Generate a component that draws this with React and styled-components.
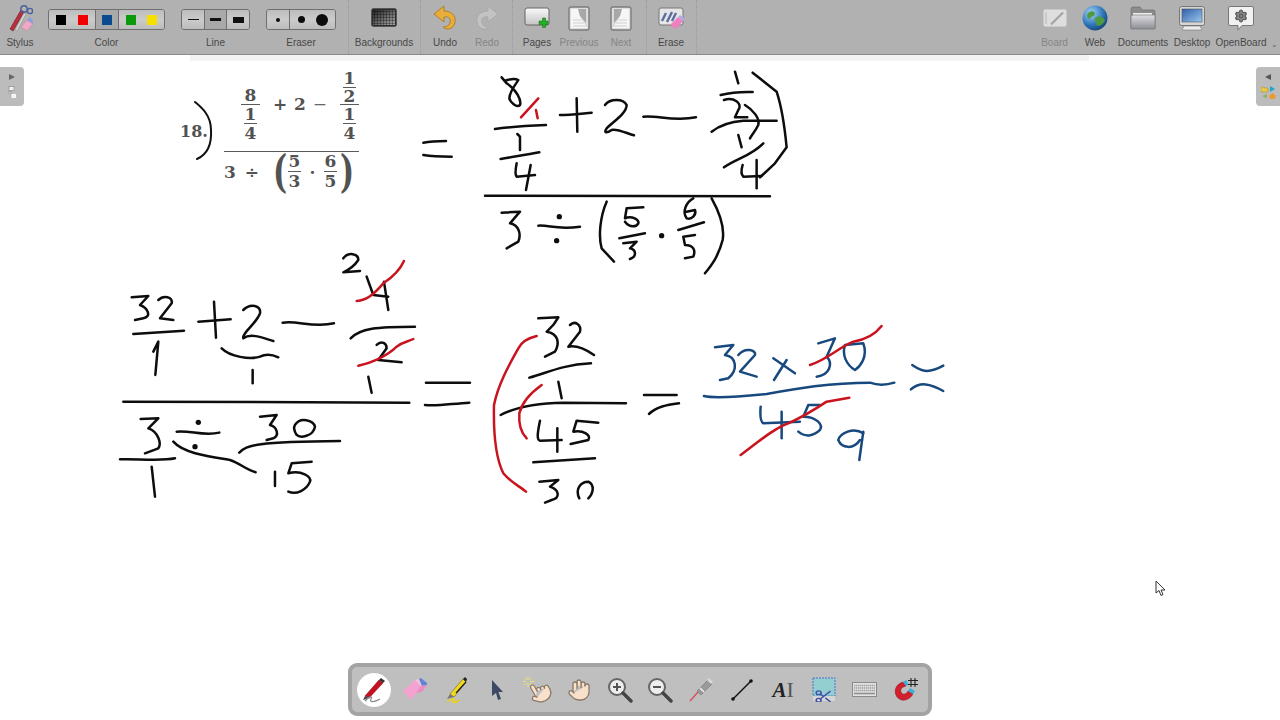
import React from 'react';
import styled, { createGlobalStyle } from 'styled-components';
import { Hand, Pointer, Scissors, Settings } from 'lucide-react';

const GlobalStyle = createGlobalStyle`
    html, body { margin: 0; padding: 0; background: #fff; }
    body { font-family: "Liberation Sans", sans-serif; overflow: hidden; }
`;

const Page = styled.div`
    width: 1280px;
    height: 720px;
    display: flex;
    flex-direction: column;
    overflow: hidden;
`;

const TopBar = styled.div`
    height: 54px;
    flex: none;
    display: flex;
    align-items: stretch;
    background: #b1b1b1;
    border-bottom: 1px solid #8b8b8b;
`;

const Spacer = styled.div`
    flex: 1;
`;

const Tool = styled.div`
    width: ${p => p.$w}px;
    flex: none;
    display: flex;
    flex-direction: column;
    align-items: center;
    color: ${p => (p.$off ? '#858585' : '#484848')};
`;

const ToolIcon = styled.div`
    height: 36px;
    display: flex;
    align-items: center;
    justify-content: center;
    opacity: ${p => (p.$off ? 0.75 : 1)};
`;

const ToolLabel = styled.div`
    font-size: 10px;
    line-height: 14px;
    white-space: nowrap;
`;

const Sep = styled.div`
    width: 0;
    flex: none;
    margin: 0 3px 0 ${p => p.$l || 4}px;
    border-left: 1px dotted #999;
`;

const ControlGroup = styled.div`
    flex: none;
    margin-left: ${p => p.$ml}px;
    display: flex;
    flex-direction: column;
    align-items: center;
    color: #484848;
`;

const Segmented = styled.div`
    margin-top: 9px;
    height: 21px;
    margin-bottom: 6px;
    box-sizing: border-box;
    display: flex;
    border: 1px solid #6f6f6f;
    border-radius: 3px;
    overflow: hidden;
`;

const Segment = styled.div`
    width: ${p => p.$w}px;
    display: flex;
    align-items: center;
    justify-content: space-around;
    padding: 0 ${p => p.$pad || 0}px;
    box-sizing: border-box;
    background: ${p => (p.$on ? '#a9a9a9' : 'linear-gradient(#bdbdbd, #cbcbcb 50%, #bdbdbd)')};
    & + & { border-left: 1px solid #6f6f6f; }
`;

const Swatch = styled.div`
    width: 10px;
    height: 10px;
    background: ${p => p.$c};
`;

const LineMark = styled.div`
    width: ${p => p.$w}px;
    height: ${p => p.$h}px;
    background: #111;
`;

const Dot = styled.div`
    width: ${p => p.$d}px;
    height: ${p => p.$d}px;
    border-radius: 50%;
    background: #0c0c0c;
`;

const MoreArrow = styled.div`
    width: 11px;
    flex: none;
    display: flex;
    align-items: flex-end;
    justify-content: center;
    padding-bottom: 5px;
    box-sizing: border-box;
    color: #666;
    font-size: 8px;
    line-height: 8px;
`;

const Canvas = styled.div`
    flex: 1;
    position: relative;
    background: #fff;
`;

const TopStrip = styled.div`
    height: 6px;
    margin: 0 191px 0 190px;
    background: #f3f3f3;
`;

const Ink = styled.svg`
    position: absolute;
    left: 0;
    top: 0;
    width: 1280px;
    height: 665px;
    fill: none;
    stroke-linecap: round;
    stroke-linejoin: round;
`;

const SideTab = styled.div`
    position: absolute;
    top: 12px;
    ${p => (p.$right ? 'right: 0;' : 'left: 0;')}
    width: 24px;
    height: 39px;
    background: #bcbcbc;
    border-radius: ${p => (p.$right ? '4px 0 0 4px' : '0 4px 4px 0')};
    display: flex;
    flex-direction: column;
    align-items: center;
    padding-top: 6px;
    box-sizing: border-box;
    gap: 5px;
`;

const Problem = styled.div`
    position: absolute;
    left: 180px;
    top: 14px;
    display: flex;
    align-items: center;
    color: #525252;
    font-family: "DejaVu Serif", "Liberation Serif", serif;
    font-weight: 700;
    font-size: 17px;
`;

const ProblemNo = styled.div`
    width: 44px;
    flex: none;
    margin-top: 3px;
    font-size: 16px;
`;

const Frac = styled.div`
    display: flex;
    flex-direction: column;
    align-items: center;
`;

const Rule = styled.div`
    height: 1px;
    width: ${p => p.$w}px;
    background: #5a5a5a;
`;

const Cell = styled.div`
    line-height: ${p => p.$h || 18}px;
    height: ${p => p.$h || 18}px;
`;

const Numerator = styled.div`
    width: 135px;
    box-sizing: border-box;
    padding-left: 17px;
    margin-bottom: 9px;
    display: flex;
    align-items: flex-end;
    justify-content: space-between;
`;

const Denominator = styled.div`
    width: 135px;
    display: flex;
    align-items: center;
`;

const MiddleOp = styled.div`
    margin-bottom: 28px;
    white-space: pre;
    word-spacing: 1px;
`;

const Minus = styled.span`
    font-weight: 400;
    color: #666;
`;

const DivideOp = styled.div`
    width: 46px;
    flex: none;
    white-space: pre;
    word-spacing: 3px;
`;

const TimesOp = styled.div`
    width: 23px;
    flex: none;
    text-align: center;
`;

const BigParen = styled.div`
    width: 18px;
    flex: none;
    text-align: center;
    font-size: 44px;
    font-weight: 700;
    line-height: 38px;
    transform: scaleX(.68);
`;

const Dock = styled.div`
    position: absolute;
    left: 348px;
    bottom: 4px;
    width: 584px;
    height: 53px;
    box-sizing: border-box;
    display: flex;
    align-items: center;
    justify-content: center;
    background: #bfbfbf;
    border: 4px solid #a3a3a3;
    border-radius: 9px;
`;

const DockSlot = styled.div`
    width: 40.9px;
    height: 40px;
    flex: none;
    display: flex;
    align-items: center;
    justify-content: center;
`;

const DockActive = styled.div`
    width: 34px;
    height: 34px;
    border-radius: 50%;
    display: flex;
    align-items: center;
    justify-content: center;
    background: radial-gradient(#fff 65%, #ddd);
`;

const TextToolA = styled.div`
    display: flex;
    align-items: center;
    color: #222;
    font-family: "Liberation Serif", serif;
    font-style: italic;
    font-weight: 700;
    font-size: 21px;
    line-height: 24px;
`;

const TextToolCaret = styled.span`
    font-style: normal;
    font-weight: 400;
    font-size: 22px;
    color: #555;
`;

const MouseCursor = styled.svg`
    position: absolute;
    left: 1155px;
    top: 525px;
`;

const StylusIcon = () => (
    <svg width="26" height="28" viewBox="0 0 26 28">
        <path d="M3 25 L14 6 L17 8 L6 27 Z" fill="#b8303a" stroke="#6b1a20" strokeWidth=".6" />
        <path d="M8 26 L17 9 L19 10 L10 27 Z" fill="#d8d8d8" stroke="#777" strokeWidth=".4" />
        <circle cx="17" cy="5" r="3.2" fill="none" stroke="#4a5f9c" strokeWidth="1.4" />
        <circle cx="23" cy="7" r="2.6" fill="none" stroke="#4a5f9c" strokeWidth="1.4" />
        <path d="M14 23 L20 16 L26 20 L20 27 Z" fill="#f0a8c8" stroke="#b77" strokeWidth=".4" />
        <path d="M20 16 L23 13 L26 17 L26 20 Z" fill="#8a9fd8" />
    </svg>
);

const BackgroundsIcon = () => (
    <svg width="26" height="20" viewBox="0 0 26 20">
        <defs>
            <linearGradient id="bgGrad" x1="0" y1="0" x2="1" y2="1">
                <stop offset="0" stopColor="#222" />
                <stop offset="1" stopColor="#aaa" />
            </linearGradient>
            <pattern id="bgGrid" width="3" height="3" patternUnits="userSpaceOnUse">
                <path d="M3 0H0V3" fill="none" stroke="#000" strokeWidth=".6" />
            </pattern>
        </defs>
        <rect x=".5" y=".5" width="25" height="18" rx="2" fill="#2c2c2c" stroke="#555" />
        <rect x="2" y="2" width="22" height="15" fill="url(#bgGrad)" />
        <rect x="2" y="2" width="22" height="15" fill="url(#bgGrid)" />
    </svg>
);

const ArrowIcon = ({ flip, fill, edge }) => (
    <svg width="24" height="26" viewBox="0 0 24 26" style={flip ? { transform: 'scaleX(-1)' } : undefined}>
        <path d="M11 1 L1 9 L11 17 L11 12 C16 11 18 14 17 18 C16 21 13 22 10 22 C14 26 21 24 22 17 C23 10 18 6 11 6 Z" fill={fill} stroke={edge} strokeWidth=".8" />
    </svg>
);

const PagesIcon = () => (
    <svg width="26" height="24" viewBox="0 0 26 24">
        <defs>
            <linearGradient id="pageGrad" x1="0" y1="0" x2="0" y2="1">
                <stop offset="0" stopColor="#fafafa" />
                <stop offset="1" stopColor="#c4c4c4" />
            </linearGradient>
        </defs>
        <rect x="1" y="2" width="24" height="17" rx="2" fill="url(#pageGrad)" stroke="#666" />
        <path d="M17 15 h3.5 v-3 h3 v3 h2.5 v3.5 h-2.5 v3 h-3 v-3 h-3.5 Z" transform="translate(-2 0)" fill="#22b022" stroke="#136b13" strokeWidth=".5" />
    </svg>
);

const PageFlipIcon = ({ flip }) => (
    <svg width="22" height="25" viewBox="0 0 22 25" style={flip ? { transform: 'scaleX(-1)' } : undefined}>
        <rect x="1" y="1" width="20" height="23" rx="2" fill="#dcdcdc" stroke="#7c7c7c" strokeWidth="1.4" />
        <path d="M3 22 L3 3 L10 3 L12 10 L19 22 Z" fill="#f6f6f6" />
        <path d="M10 3 L18 3 L18 17 L12 10 Z" fill="#a8a8a8" />
        <path d="M5 14H14M5 17H16M5 20H18" stroke="#cfcfcf" strokeWidth="1" />
    </svg>
);

const EraseIcon = () => (
    <svg width="27" height="24" viewBox="0 0 27 24">
        <rect x="1" y="2" width="24" height="17" rx="2" fill="#e6e6e6" stroke="#777" />
        <path d="M4 15 L8 7 M9 16 L14 6 M14 15 L18 7" stroke="#5a6fa0" strokeWidth="2.4" />
        <path d="M12 19 L20 11 L25 15 L18 23 Z" fill="#ee7fc0" />
        <path d="M20 11 L22 9 L27 13 L25 15 Z" fill="#b9a8e0" />
    </svg>
);

const BoardIcon = () => (
    <svg width="24" height="18" viewBox="0 0 24 18">
        <rect x=".5" y=".5" width="23" height="17" rx="2" fill="#dedede" stroke="#c8c8c8" />
        <path d="M7 15 L19 3 L21 4 L9 16 Z" fill="#a2a2a2" />
        <path d="M3 3V15" stroke="#b5b5b5" strokeWidth="1" />
    </svg>
);

const WebIcon = () => (
    <svg width="26" height="26" viewBox="0 0 26 26">
        <defs>
            <radialGradient id="globe" cx=".35" cy=".3" r=".8">
                <stop offset="0" stopColor="#a5d4f5" />
                <stop offset=".6" stopColor="#2c74b8" />
                <stop offset="1" stopColor="#113c6b" />
            </radialGradient>
        </defs>
        <circle cx="13" cy="13" r="12.5" fill="url(#globe)" />
        <path d="M6 8 C9 5 13 6 13 9 C12 12 8 11 8 14 C6 14 4 11 6 8 Z M13 13 C17 10 22 12 23 16 C20 20 17 22 14 20 C15 17 12 16 13 13 Z" fill="#4f9a3f" />
    </svg>
);

const FolderIcon = () => (
    <svg width="26" height="24" viewBox="0 0 26 24">
        <defs>
            <linearGradient id="folderGrad" x1="0" y1="0" x2="0" y2="1">
                <stop offset="0" stopColor="#dedee2" />
                <stop offset="1" stopColor="#8d8d96" />
            </linearGradient>
        </defs>
        <path d="M1 22 V3 Q1 1 3 1 H10 L12 4 H23 Q25 4 25 6 V22 Z" fill="#8c8c8c" stroke="#666" strokeWidth=".6" />
        <path d="M3 7 H22 V10 H3 Z" fill="#ededed" />
        <path d="M1 23 V11 Q1 9 3 9 H25 V23 Z" fill="url(#folderGrad)" stroke="#6e6e6e" strokeWidth=".6" />
    </svg>
);

const DesktopIcon = () => (
    <svg width="26" height="25" viewBox="0 0 26 25">
        <defs>
            <linearGradient id="screenGrad" x1="0" y1="0" x2="1" y2="1">
                <stop offset="0" stopColor="#2f5fa8" />
                <stop offset="1" stopColor="#9cc7ef" />
            </linearGradient>
        </defs>
        <rect x=".5" y=".5" width="25" height="19" rx="2" fill="#d5d5d5" stroke="#777" />
        <rect x="3" y="3" width="20" height="13" fill="url(#screenGrad)" stroke="#444" strokeWidth=".5" />
        <path d="M5 20 H21 L23 24 H3 Z" fill="#ececec" stroke="#777" strokeWidth=".6" />
    </svg>
);

const OpenBoardIcon = () => (
    <svg width="26" height="25" viewBox="0 0 26 25">
        <path d="M2 .5 H24 Q25.5 .5 25.5 2 V18 Q25.5 19.5 24 19.5 H14 L10 24 V19.5 H2 Q.5 19.5 .5 18 V2 Q.5 .5 2 .5 Z" fill="#f1f1f1" stroke="#777" />
        <g transform="translate(6 3)">
            <Settings size={14} color="#5c5c5c" fill="#8c8c8c" strokeWidth={2.2} />
        </g>
    </svg>
);

const LeftTabGlyphs = () => (
    <>
        <svg width="8" height="8" viewBox="0 0 8 8"><path d="M1 1 L7 4 L1 7 Z" fill="#666" /></svg>
        <svg width="9" height="13" viewBox="0 0 9 13">
            <rect x="1" y=".5" width="5" height="4" fill="#eee" stroke="#777" strokeWidth=".5" />
            <rect x="1" y="5.5" width="2" height="2" fill="#eee" stroke="#777" strokeWidth=".5" />
            <rect x="3" y="7.5" width="5.5" height="5" fill="#f5f5f5" stroke="#999" strokeWidth=".4" />
        </svg>
    </>
);

const RightTabGlyphs = () => (
    <>
        <svg width="8" height="8" viewBox="0 0 8 8"><path d="M7 1 L1 4 L7 7 Z" fill="#555" /></svg>
        <svg width="15" height="13" viewBox="0 0 15 13">
            <path d="M0 1 H3 L4 2 H7 V6 H0 Z" fill="#e7c94b" stroke="#8d7620" strokeWidth=".4" />
            <path d="M9 0 L14 3 L9 6 Z" fill="#22a6c9" />
            <path d="M6 8 L1 10 L6 12.5 Z" fill="#8fb25b" />
            <path d="M11.5 7 L15 10 L13.5 13 H9.5 L8 10 Z" fill="#ec9a2e" />
        </svg>
    </>
);

const DockPen = () => (
    <svg width="28" height="28" viewBox="0 0 28 28">
        <path d="M5 20 L19 4 L23 7 L9 22 Z" fill="#c8101f" stroke="#6d0a12" strokeWidth=".5" />
        <path d="M19 4 L21 2 L25 5 L23 7 Z" fill="#333" />
        <path d="M5 20 L3 24 L9 22 Z" fill="#444" />
        <path d="M5 25 C9 20 13 20 11 23 C9 27 15 26 20 23" fill="none" stroke="#888" strokeWidth="1.3" />
    </svg>
);

const DockEraser = () => (
    <svg width="26" height="24" viewBox="0 0 26 24">
        <path d="M1 13 L13 2 L19 8 L9 22 Z" fill="#f4a3d0" />
        <path d="M13 2 L17 1 L25 7 L19 8 Z" fill="#f7c3dc" />
        <path d="M17 1 L19 0 L25 5 L25 7 L20 8 Z" fill="#5e86d6" />
        <path d="M19 8 L25 7 L20 14 L14 15 Z" fill="#e98dc2" />
    </svg>
);

const DockMarker = () => (
    <svg width="24" height="28" viewBox="0 0 24 28">
        <path d="M6 18 L19 3 L22 6 L10 21 Z" fill="#f2da1c" stroke="#5a5000" strokeWidth=".5" />
        <path d="M19 3 L21 1 L23 3 L22 6 Z" fill="#222" />
        <path d="M12 17 L22 6" stroke="#222" strokeWidth="1.3" />
        <path d="M6 18 L3 23 L10 21 Z" fill="#777" />
        <path d="M3 26 C8 22 13 22 9 25 C8 27 11 27 16 24" fill="none" stroke="#e8d020" strokeWidth="1.6" />
    </svg>
);

const DockArrow = () => (
    <svg width="14" height="22" viewBox="0 0 14 22">
        <path d="M2 1 L13 13 L8.5 13 L11 20 L8 21 L6 14 L2 17 Z" fill="#3d4a66" />
    </svg>
);

const DockSpark = () => (
    <svg width="32" height="30" viewBox="0 0 32 30">
        <path d="M6 1V5M6 8V12M1 6.500H4M8 6.500H12M2.500 3L4.500 5M9.500 3L7.500 5M2.500 10L4.500 8M9.500 10L7.500 8" stroke="#efe46a" strokeWidth="1" />
        <foreignObject x="6" y="5" width="26" height="25">
            <Pointer size={24} color="#8a7868" fill="#f9e0ca" strokeWidth={1.2} style={{ transform: 'rotate(-30deg)' }} />
        </foreignObject>
    </svg>
);

const Magnifier = ({ plus }) => (
    <svg width="26" height="26" viewBox="0 0 26 26">
        <circle cx="10" cy="10" r="8" fill="#eee" stroke="#666" strokeWidth="2" />
        <path d="M16 16 L24 24" stroke="#444" strokeWidth="3.4" strokeLinecap="round" />
        <path d="M6 10 H14" stroke="#555" strokeWidth="2" />
        {plus && <path d="M10 6 V14" stroke="#555" strokeWidth="2" />}
    </svg>
);

const DockLaser = () => (
    <svg width="26" height="26" viewBox="0 0 26 26">
        <path d="M2 24 L10 15" stroke="#d8525e" strokeWidth="1.5" />
        <path d="M9 14 L20 3 L24 7 L13 18 Z" fill="#9a9a9a" stroke="#6a6a6a" strokeWidth=".5" />
        <path d="M12 11 L16 15" stroke="#eee" strokeWidth="1.6" />
        <path d="M19 3 L21 1 L25 5 L23 7 Z" fill="#d8d8d8" />
    </svg>
);

const DockLine = () => (
    <svg width="24" height="24" viewBox="0 0 24 24">
        <path d="M3 21 L21 3" stroke="#111" strokeWidth="1.4" />
        <circle cx="3" cy="21" r="1.8" fill="#111" />
        <circle cx="21" cy="3" r="1.8" fill="#111" />
    </svg>
);

const DockCapture = () => (
    <svg width="24" height="25" viewBox="0 0 24 25">
        <rect x="1" y="1" width="22" height="18" fill="#93cfd0" stroke="#4d73c9" strokeDasharray="2 1" />
        <rect x="1" y="19" width="22" height="5" fill="#d5d5d5" />
        <foreignObject x="2" y="12" width="20" height="14">
            <Scissors size={15} color="#3f4fa6" strokeWidth={2} style={{ transform: 'scaleX(1.3)', marginLeft: 2 }} />
        </foreignObject>
    </svg>
);

const DockKeyboard = () => (
    <svg width="25" height="15" viewBox="0 0 25 15">
        <rect x=".5" y=".5" width="24" height="14" fill="#e2e2e2" stroke="#8a8a8a" />
        <path d="M2 3.500H23M2 6H23M2 8.500H23" stroke="#9e9e9e" strokeDasharray="1.4 .6" strokeWidth="1.6" />
        <path d="M2 11.500H23" stroke="#8e8e8e" strokeWidth="1.6" />
    </svg>
);

const DockMagnet = () => (
    <svg width="26" height="26" viewBox="0 0 26 26">
        <path d="M10 5 C3 7 0 14 4 20 C8 25 16 24 20 17 L15 14 C13 18 9 18 8 15 C7 12 9 10 13 9 Z" fill="#d3202c" stroke="#80101a" strokeWidth=".5" />
        <path d="M10 5 L13 9 L15.500 7.500 L13 3 Z M20 17 L15 14 L17 11 L22 14 Z" fill="#36b0d8" />
        <path d="M18 1V10M22 1V10M15 3.500H25M15 7.500H25" stroke="#222" strokeWidth="1.1" />
    </svg>
);

const TOOLS_LEFT = [
    { sep: true, l: 12 },
    { label: 'Backgrounds', w: 64, icon: <BackgroundsIcon /> },
    { sep: true },
    { label: 'Undo', w: 42, icon: <ArrowIcon fill="#e9ad3a" edge="#a8741a" /> },
    { label: 'Redo', w: 42, off: true, icon: <ArrowIcon flip fill="#c3c3c3" edge="#a5a5a5" /> },
    { sep: true },
    { label: 'Pages', w: 42, icon: <PagesIcon /> },
    { label: 'Previous', w: 42, off: true, icon: <PageFlipIcon /> },
    { label: 'Next', w: 42, off: true, icon: <PageFlipIcon flip /> },
    { sep: true },
    { label: 'Erase', w: 42, icon: <EraseIcon /> },
    { sep: true },
];

const TOOLS_RIGHT = [
    { label: 'Board', w: 41, off: true, icon: <BoardIcon /> },
    { label: 'Web', w: 40, icon: <WebIcon /> },
    { label: 'Documents', w: 56, icon: <FolderIcon /> },
    { label: 'Desktop', w: 42, icon: <DesktopIcon /> },
    { label: 'OpenBoard', w: 56, icon: <OpenBoardIcon /> },
];

const renderTool = (t, i) =>
    t.sep ? (
        <Sep key={i} $l={t.l} />
    ) : (
        <Tool key={t.label} $w={t.w} $off={t.off}>
            <ToolIcon>{t.icon}</ToolIcon>
            <ToolLabel>{t.label}</ToolLabel>
        </Tool>
    );

const BLACK = '#0d0d0d';
const RED = '#c9141f';
const BLUE = '#17497f';

// pen strokes, grouped by the crop they were traced from (1/3 scale)
const STROKES_A = [
    'M40 248C65 243 90 243 108 243', 'M40 285C70 290 100 290 125 290',
    'M275 52L290 70C320 90 335 120 330 135C320 145 300 125 298 115C300 90 320 70 325 60C315 55 295 58 285 62',
    'M255 207C300 200 360 197 408 195', 'M322 222L330 230L330 270', 'M272 297C310 290 350 285 388 277',
    'M320 310C315 335 315 345 320 350L375 345', 'M362 315L348 390',
    'M450 165C480 165 520 160 545 158', 'M500 115L502 215',
    'M585 135C600 115 640 115 650 135C650 160 610 185 590 205C580 220 590 220 605 210C620 205 650 220 672 226',
    'M700 170C740 165 790 185 858 172', 'M975 35L985 70', 'M932 105C960 98 1000 95 1028 96',
    'M942 120C970 110 1000 130 985 150L975 172L1012 172', 'M905 215C930 195 960 185 1000 182L1100 182',
    'M1005 135C1030 150 1050 175 1045 195C1035 215 1025 225 1020 235', 'M985 225L995 262',
    'M942 322C980 295 1020 290 1060 250', 'M998 315C992 335 995 345 1000 350L1055 348', 'M1040 300L1040 385',
    'M1028 38L1100 95C1115 140 1125 210 1130 262L1095 310L1050 352',
    'M225 407L1080 409', 'M275 458L330 455L300 490C325 495 335 520 325 545L290 565',
    'M385 497C420 495 440 510 510 500', 'M590 425C570 470 565 530 575 565L612 605',
    'M700 442L650 445L645 475C665 465 690 480 685 490C680 500 660 505 645 485', 'M628 535L705 520',
    'M640 550L680 545L660 565C680 570 680 590 660 597',
    'M850 415C830 425 815 455 830 475C845 480 860 465 855 450L830 455', 'M805 510L882 487',
    'M855 525L820 530L825 555C850 555 858 570 850 590L825 595',
    'M905 415C930 460 945 500 938 540C925 590 905 615 885 640',
];
const STROKES_A_RED = ['M333 172L385 115', 'M378 150L383 175'];
const DOTS_A = [[448, 470], [440, 542], [755, 527]];

const STROKES_B = [
    'M700 55C715 35 745 40 745 60C735 75 715 90 700 97L750 93', 'M770 110L790 165L835 170', 'M822 125L835 210',
    'M722 295C750 265 800 260 915 260', 'M800 315C815 300 830 310 830 325L805 360L875 367', 'M775 410L785 458',
    'M518 248C560 240 610 265 672 250', 'M400 210C420 190 455 195 450 220C440 250 395 280 400 295C420 280 450 290 490 303',
    'M265 245L362 238', 'M312 185L318 293', 'M65 172L115 168L90 195C115 205 125 230 100 235L75 240',
    'M145 180C160 165 190 170 185 190L150 235L190 240', 'M70 282L222 272', 'M130 335L145 305L136 405',
    'M335 325C360 350 420 360 450 350C470 340 490 345 505 352', 'M428 390L428 430', 'M40 485L898 488',
    'M948 428L1080 428', 'M945 495C980 500 1030 490 1078 488', 'M92 537L145 535L115 565C145 575 155 610 145 625L105 640',
    'M30 658C70 655 150 665 195 655', 'M125 680L135 770', 'M200 575C240 570 280 590 328 578',
    'M190 605C220 640 300 650 360 660C390 670 410 690 437 697', 'M450 530L500 525L480 555C500 560 510 585 490 595L470 600',
    'M555 555C570 530 610 540 615 560C610 590 570 595 560 585C550 570 552 560 555 555',
    'M388 638C410 615 440 605 690 603', 'M495 695L495 738', 'M605 665L545 670L535 700C575 690 605 710 600 725C590 750 560 765 535 755',
];
const STROKES_B_RED = [
    'M740 183C770 180 790 165 820 130C850 110 870 90 882 63',
    'M745 377C780 370 830 350 860 320C880 305 895 305 910 297',
];
const DOTS_B = [[265, 547], [255, 620]];

const STROKES_C = [
    'M175 55L235 52C220 80 205 90 200 95C235 100 240 130 225 155L195 170',
    'M270 75C285 60 305 75 300 95L265 140C290 135 320 150 342 165', 'M148 233C200 220 240 195 333 190', 'M235 245L245 295',
    'M62 345C100 325 150 310 250 308L438 310', 'M180 362C172 400 170 420 180 422L245 420', 'M232 385L232 455',
    'M355 368L290 362L280 395C310 390 335 405 325 420L272 432', 'M160 487L345 475',
    'M178 545L235 540L210 560C240 570 240 595 215 600L195 608', 'M298 595C285 570 300 545 325 545C345 555 340 580 325 595',
    'M492 285L590 285', 'M507 342C530 320 560 315 597 310',
];
const STROKES_C_RED = [
    'M170 108C140 115 125 125 115 145C90 190 55 250 42 315C40 400 45 470 70 520C90 545 120 560 138 575',
    'M185 255C150 280 125 310 118 340C115 380 125 400 140 415',
    'M990 195C1040 180 1080 140 1120 125C1150 120 1180 110 1205 78',
    'M782 465C830 430 880 385 925 370C970 350 1010 325 1040 305L1108 293',
];
const STROKES_C_BLUE = [
    'M705 142L760 135L735 165C770 170 775 210 745 235L720 240', 'M775 165C795 140 830 150 825 165L780 215L830 230',
    'M880 175L945 220', 'M920 180L882 240', 'M1015 130L1065 115L1040 170C1060 190 1050 225 1010 230',
    'M1095 135L1150 130C1165 170 1140 200 1125 210C1100 195 1085 165 1095 135',
    'M672 288C700 295 780 290 860 282C950 265 1050 248 1170 248C1190 255 1220 255 1243 248',
    'M842 320C840 345 840 365 850 370L960 365', 'M905 335L905 415',
    'M1020 315L985 315L970 350C1010 350 1030 375 1020 390C1000 410 975 412 955 395',
    'M1150 400C1120 380 1080 400 1075 420C1085 445 1120 450 1140 420', 'M1150 395L1138 480',
    'M1297 195C1320 210 1340 225 1390 197', 'M1293 268C1320 245 1350 250 1390 273',
];

const Strokes = ({ list, color, width = 7.5 }) => (
    <g stroke={color} strokeWidth={width}>
        {list.map(d => <path key={d} d={d} />)}
    </g>
);

const Dots = ({ list }) => (
    <g fill={BLACK}>
        {list.map(([x, y]) => <circle key={x} cx={x} cy={y} r="8" />)}
    </g>
);

const Handwriting = () => (
    <Ink viewBox="0 55 1280 665">
        <path d="M195 102C201 107 211 115 211 130C212 147 206 155 197 159" stroke="#111" strokeWidth="2" />
        <g transform="translate(410 60) scale(.3333)">
            <Strokes list={STROKES_A} color={BLACK} />
            <Strokes list={STROKES_A_RED} color={RED} />
            <Dots list={DOTS_A} />
        </g>
        <g transform="translate(110 240) scale(.3333)">
            <Strokes list={STROKES_B} color={BLACK} />
            <Strokes list={STROKES_B_RED} color={RED} />
            <Dots list={DOTS_B} />
        </g>
        <g transform="translate(480 300) scale(.3333)">
            <Strokes list={STROKES_C} color={BLACK} />
            <Strokes list={STROKES_C_BLUE} color={BLUE} />
            <Strokes list={STROKES_C_RED} color={RED} />
        </g>
    </Ink>
);

const SmallFrac = ({ top, bottom, w = 13, topH, bottomH }) => (
    <Frac>
        <Cell $h={topH}>{top}</Cell>
        <Rule $w={w} />
        <Cell $h={bottomH}>{bottom}</Cell>
    </Frac>
);

const PrintedProblem = () => (
    <Problem>
        <ProblemNo>18.</ProblemNo>
        <Frac>
            <Numerator>
                <Frac>
                    <Cell>8</Cell>
                    <Rule $w={19} />
                    <SmallFrac top="1" bottom="4" />
                </Frac>
                <MiddleOp>+ 2 <Minus>−</Minus></MiddleOp>
                <Frac>
                    <SmallFrac top="1" bottom="2" bottomH={16} />
                    <Rule $w={19} />
                    <SmallFrac top="1" bottom="4" />
                </Frac>
            </Numerator>
            <Rule $w={135} />
            <Denominator>
                <DivideOp>3 ÷</DivideOp>
                <BigParen>(</BigParen>
                <SmallFrac top="5" bottom="3" topH={19} bottomH={19} />
                <TimesOp>·</TimesOp>
                <SmallFrac top="6" bottom="5" topH={19} bottomH={19} />
                <BigParen>)</BigParen>
            </Denominator>
        </Frac>
    </Problem>
);

const App = () => {
    return (
        <Page>
            <GlobalStyle />
            <TopBar>
                <Tool $w={40}>
                    <ToolIcon><StylusIcon /></ToolIcon>
                    <ToolLabel>Stylus</ToolLabel>
                </Tool>
                <ControlGroup $ml={8}>
                    <Segmented>
                        <Segment $w={46} $pad={1}><Swatch $c="#000" /><Swatch $c="#f00000" /></Segment>
                        <Segment $w={23} $on><Swatch $c="#0b4a8f" /></Segment>
                        <Segment $w={46} $pad={1}><Swatch $c="#0a9a0a" /><Swatch $c="#f5e000" /></Segment>
                    </Segmented>
                    <ToolLabel>Color</ToolLabel>
                </ControlGroup>
                <ControlGroup $ml={16}>
                    <Segmented>
                        <Segment $w={22}><LineMark $w={11} $h={1} /></Segment>
                        <Segment $w={22} $on><LineMark $w={11} $h={3} /></Segment>
                        <Segment $w={23}><LineMark $w={11} $h={6} /></Segment>
                    </Segmented>
                    <ToolLabel>Line</ToolLabel>
                </ControlGroup>
                <ControlGroup $ml={16}>
                    <Segmented>
                        <Segment $w={22}><Dot $d={4} /></Segment>
                        <Segment $w={46} $pad={2}><Dot $d={7} /><Dot $d={12} /></Segment>
                    </Segmented>
                    <ToolLabel>Eraser</ToolLabel>
                </ControlGroup>
                {TOOLS_LEFT.map(renderTool)}
                <Spacer />
                {TOOLS_RIGHT.map(renderTool)}
                <MoreArrow>⌄</MoreArrow>
            </TopBar>
            <Canvas>
                <TopStrip />
                <Handwriting />
                <PrintedProblem />
                <SideTab><LeftTabGlyphs /></SideTab>
                <SideTab $right><RightTabGlyphs /></SideTab>
                <MouseCursor width="12" height="17" viewBox="0 0 12 17">
                    <path d="M1 1 L1 13 L4 10.500 L6 15.500 L8 14.500 L6 10 L10 10 Z" fill="#fff" stroke="#333" strokeWidth="1" />
                </MouseCursor>
                <Dock>
                    <DockSlot><DockActive><DockPen /></DockActive></DockSlot>
                    <DockSlot><DockEraser /></DockSlot>
                    <DockSlot><DockMarker /></DockSlot>
                    <DockSlot><DockArrow /></DockSlot>
                    <DockSlot><DockSpark /></DockSlot>
                    <DockSlot><Hand size={24} color="#8a7868" fill="#f9e0ca" strokeWidth={1.3} /></DockSlot>
                    <DockSlot><Magnifier plus /></DockSlot>
                    <DockSlot><Magnifier /></DockSlot>
                    <DockSlot><DockLaser /></DockSlot>
                    <DockSlot><DockLine /></DockSlot>
                    <DockSlot><TextToolA>A<TextToolCaret>I</TextToolCaret></TextToolA></DockSlot>
                    <DockSlot><DockCapture /></DockSlot>
                    <DockSlot><DockKeyboard /></DockSlot>
                    <DockSlot><DockMagnet /></DockSlot>
                </Dock>
            </Canvas>
        </Page>
    );
};

export default App;
